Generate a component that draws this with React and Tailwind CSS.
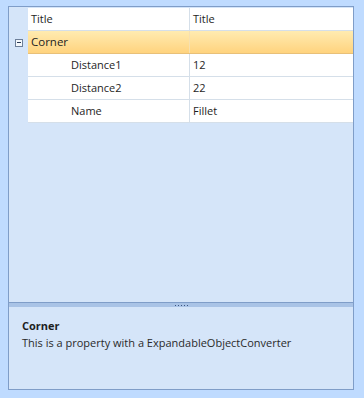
export default function App() {
  const rows = [
    { name: "Distance1", value: "12" },
    { name: "Distance2", value: "22" },
    { name: "Name", value: "Fillet" },
  ];

  return (
    <div
      className="w-[364px] h-[398px] bg-[#bfdbff] pt-[6px] pl-[8px] text-[11px] text-[#1e1e1e]"
      style={{ fontFamily: '"Open Sans", "Noto Sans", sans-serif' }}
    >
      <div className="w-[346px] h-[384px] border border-[#7f9dc8] bg-[#d5e5f9] flex flex-col">
        {/* Grid area */}
        <div className="flex-1 flex flex-col pt-[1px]">
          {/* header */}
          <div className="flex h-[23px]">
            <div className="w-[19px] shrink-0" />
            <div className="flex-1 flex bg-white border-b border-[#d5dfe9]">
              <div className="w-[162px] pl-[3px] border-r border-[#d5dfe9] flex items-center">Title</div>
              <div className="flex-1 pl-[3px] flex items-center">Title</div>
            </div>
          </div>
          {/* category */}
          <div className="flex h-[23px]">
            <div className="w-[19px] shrink-0 flex items-center justify-center">
              <div className="w-[8px] h-[8px] border border-[#6d7f99] bg-[#f4f8fc] flex items-center justify-center">
                <div className="w-[4px] h-[1px] bg-[#2a3a55]" />
              </div>
            </div>
            <div className="flex-1 flex bg-gradient-to-b from-[#ffebb0] to-[#ffd37e] border-b border-[#e8c079]">
              <div className="w-[162px] pl-[3px] border-r border-[#f6e0b0] flex items-center text-[11.5px]">Corner</div>
              <div className="flex-1" />
            </div>
          </div>
          {rows.map((r) => (
            <div key={r.name} className="flex h-[23px]">
              <div className="w-[19px] shrink-0" />
              <div className="flex-1 flex bg-white border-b border-[#d5dfe9]">
                <div className="w-[162px] pl-[43px] border-r border-[#d5dfe9] flex items-center">{r.name}</div>
                <div className="flex-1 pl-[3px] flex items-center">{r.value}</div>
              </div>
            </div>
          ))}
        </div>

        {/* Splitter */}
        <div className="h-[1px] bg-[#7f9dc8]" />
        <div className="h-[4px] bg-[#a9c3e6] flex items-center justify-center">
          <div className="flex gap-[2px]">
            {[0, 1, 2, 3, 4].map((i) => (
              <div key={i} className="w-[1px] h-[1px] bg-[#3c5682]" />
            ))}
          </div>
        </div>

        {/* Description */}
        <div className="h-[82px] px-[13px] pt-[10px] leading-[17px]">
          <div className="font-bold">Corner</div>
          <div className="text-[#2a2a2a]">This is a property with a ExpandableObjectConverter</div>
        </div>
      </div>
    </div>
  );
}
